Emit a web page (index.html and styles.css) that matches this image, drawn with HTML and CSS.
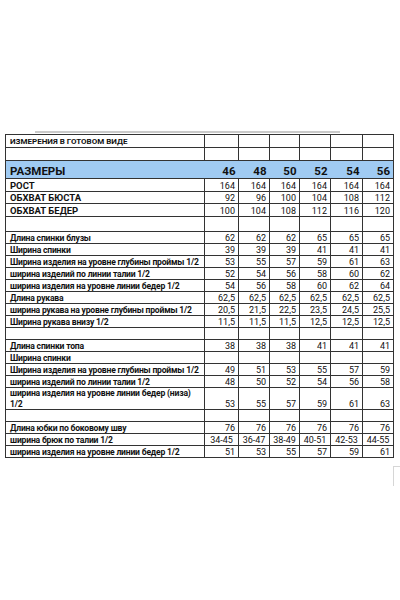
FILE: index.html
```html
<!DOCTYPE html>
<html lang="ru">
<head>
<meta charset="utf-8">
<link rel="stylesheet" href="styles.css">
</head>
<body>
<div class="page">
  <div class="topbar"></div>
  <table class="sheet">
    <colgroup>
      <col class="c-label"><col class="c-a"><col class="c-b"><col class="c-c"><col class="c-d"><col class="c-e"><col class="c-f">
    </colgroup>
    <tr class="r-top"><td class="lbl title">ИЗМЕРЕНИЯ В ГОТОВОМ ВИДЕ</td><td></td><td></td><td></td><td></td><td></td><td></td></tr>
    <tr class="r-top"><td></td><td></td><td></td><td></td><td></td><td></td><td></td></tr>
    <tr class="r-size"><td class="lbl">РАЗМЕРЫ</td><td>46</td><td>48</td><td>50</td><td>52</td><td>54</td><td>56</td></tr>
    <tr class="r-cap"><td class="lbl caps">РОСТ</td><td>164</td><td>164</td><td>164</td><td>164</td><td>164</td><td>164</td></tr>
    <tr class="r-cap"><td class="lbl caps">ОБХВАТ БЮСТА</td><td>92</td><td>96</td><td>100</td><td>104</td><td>108</td><td>112</td></tr>
    <tr class="r-cap"><td class="lbl caps">ОБХВАТ БЕДЕР</td><td>100</td><td>104</td><td>108</td><td>112</td><td>116</td><td>120</td></tr>
    <tr class="r-gap"><td></td><td></td><td></td><td></td><td></td><td></td><td></td></tr>
    <tr><td class="lbl">Длина спинки блузы</td><td>62</td><td>62</td><td>62</td><td>65</td><td>65</td><td>65</td></tr>
    <tr><td class="lbl">Ширина спинки</td><td>39</td><td>39</td><td>39</td><td>41</td><td>41</td><td>41</td></tr>
    <tr><td class="lbl">Ширина изделия на уровне глубины проймы 1/2</td><td>53</td><td>55</td><td>57</td><td>59</td><td>61</td><td>63</td></tr>
    <tr><td class="lbl">ширина изделий по линии талии 1/2</td><td>52</td><td>54</td><td>56</td><td>58</td><td>60</td><td>62</td></tr>
    <tr><td class="lbl">ширина изделия на уровне линии бедер 1/2</td><td>54</td><td>56</td><td>58</td><td>60</td><td>62</td><td>64</td></tr>
    <tr><td class="lbl">Длина рукава</td><td>62,5</td><td>62,5</td><td>62,5</td><td>62,5</td><td>62,5</td><td>62,5</td></tr>
    <tr><td class="lbl">ширина рукава на уровне глубины проймы 1/2</td><td>20,5</td><td>21,5</td><td>22,5</td><td>23,5</td><td>24,5</td><td>25,5</td></tr>
    <tr><td class="lbl">Ширина рукава внизу 1/2</td><td>11,5</td><td>11,5</td><td>11,5</td><td>12,5</td><td>12,5</td><td>12,5</td></tr>
    <tr><td></td><td></td><td></td><td></td><td></td><td></td><td></td></tr>
    <tr><td class="lbl">Длина спинки топа</td><td>38</td><td>38</td><td>38</td><td>41</td><td>41</td><td>41</td></tr>
    <tr><td class="lbl">Ширина спинки</td><td></td><td></td><td></td><td></td><td></td><td></td></tr>
    <tr><td class="lbl">Ширина изделия на уровне глубины проймы 1/2</td><td>49</td><td>51</td><td>53</td><td>55</td><td>57</td><td>59</td></tr>
    <tr><td class="lbl">ширина изделий по линии талии 1/2</td><td>48</td><td>50</td><td>52</td><td>54</td><td>56</td><td>58</td></tr>
    <tr class="r-double"><td class="lbl wrap">ширина изделия на уровне линии бедер (низа)<br>1/2</td><td>53</td><td>55</td><td>57</td><td>59</td><td>61</td><td>63</td></tr>
    <tr><td></td><td></td><td></td><td></td><td></td><td></td><td></td></tr>
    <tr><td class="lbl">Длина юбки по боковому шву</td><td>76</td><td>76</td><td>76</td><td>76</td><td>76</td><td>76</td></tr>
    <tr class="r-range"><td class="lbl">ширина брюк по талии 1/2</td><td class="rng">34-45</td><td class="rng">36-47</td><td class="rng">38-49</td><td class="rng">40-51</td><td class="rng">42-53</td><td class="rng">44-55</td></tr>
    <tr><td class="lbl">ширина изделия на уровне линии бедер 1/2</td><td>51</td><td>53</td><td>55</td><td>57</td><td>59</td><td>61</td></tr>
  </table>
  <div class="corner"></div>
</div>
</body>
</html>
```
FILE: styles.css
```css
* { box-sizing: border-box; }
body {
  margin: 0;
  background: #fff;
  font-family: Roboto, "Noto Sans", sans-serif;
  color: #111;
}
.page { padding-top: 131px; }
.topbar {
  margin-left: 35px;
  width: 305px;
  height: 2px;
  background: #cacaca;
}
.sheet {
  margin: 1px 0 0 5px;
  border-collapse: collapse;
  table-layout: fixed;
  width: 388px;
}
.c-label { width: 199px; }
.c-a { width: 34px; }
.c-b { width: 31px; }
.c-c { width: 30px; }
.c-d { width: 31px; }
.c-e { width: 32px; }
.c-f { width: 31px; }
.sheet td {
  border: 1px solid #333;
  height: 12px;
  padding: 0 3px 0 4px;
  font-size: 9px;
  line-height: 10px;
  vertical-align: bottom;
  text-align: right;
  white-space: nowrap;
  overflow: hidden;
}
.sheet .r-top td { height: 13px; }
.sheet .r-cap td { height: 12.7px; }
.sheet .r-gap td { height: 15px; }
.sheet td.lbl {
  text-align: left;
  font-weight: 700;
  font-size: 8.6px;
  letter-spacing: -0.2px;
  padding-left: 4px;
  padding-right: 0;
}
.sheet td.caps { font-size: 9.5px; letter-spacing: 0; }
.sheet td.title { font-size: 8px; letter-spacing: 0; }
.sheet td.wrap { line-height: 10.5px; }
.sheet .r-size td {
  height: 18px;
  background: #a0cbf3;
  font-size: 11.5px;
  line-height: 14px;
  font-weight: 700;
  border-left: none;
  border-right: none;
}
.sheet .r-size td:first-child { border-left: 1px solid #333; }
.sheet .r-size td:last-child { border-right: 1px solid #333; }
.sheet .r-size td.lbl { font-size: 11.5px; letter-spacing: 0; }
.sheet .r-double td { height: 22px; }
.sheet td.rng { text-align: center; padding: 0; }
.corner {
  margin: 8px 0 0 393px;
  width: 7px;
  height: 20px;
  border-top: 1px solid #d6d6d6;
  border-left: 1px solid #d6d6d6;
}
```
